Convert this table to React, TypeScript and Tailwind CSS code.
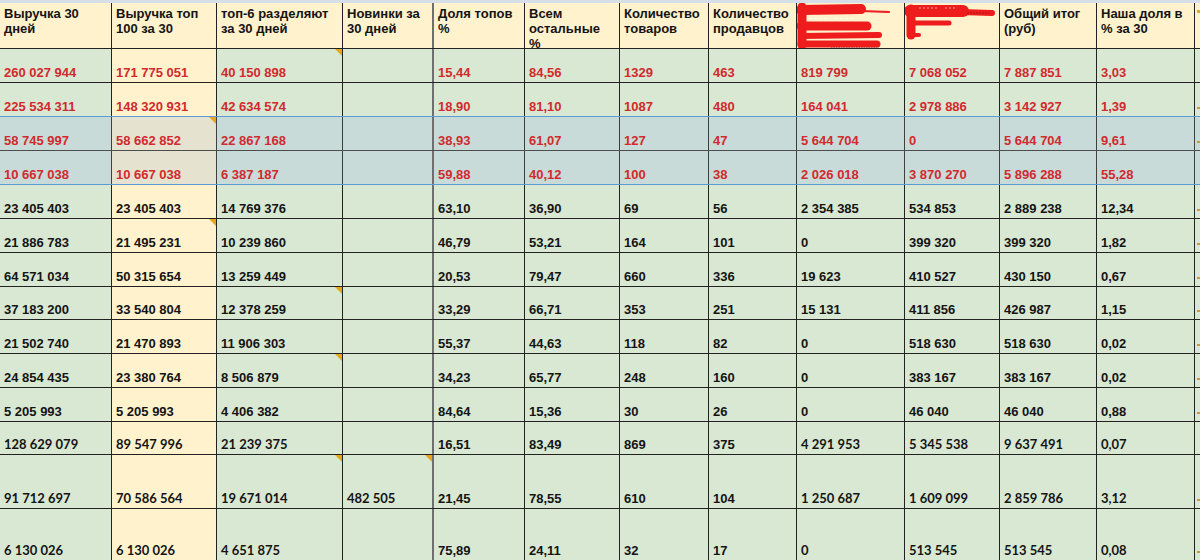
import React from 'react';

const GRID = 'grid grid-cols-[112px_105px_126px_91px_91px_95px_89px_88px_108px_95px_97px_98px_5px]';

interface Row {
  cells: string[];
  h: string;
  line: string;
  red?: boolean;
  blue?: boolean;
  calibri?: boolean;
  marks?: number[];
  edge?: boolean;
}

const BLACK = 'border-[#222]';

const rows: Row[] = [
  { cells: ['260 027 944', '171 775 051', '40 150 898', '', '15,44', '84,56', '1329', '463', '819 799', '7 068 052', '7 887 851', '3,03'], h: 'h-[34px]', line: BLACK, red: true, marks: [2] },
  { cells: ['225 534 311', '148 320 931', '42 634 574', '', '18,90', '81,10', '1087', '480', '164 041', '2 978 886', '3 142 927', '1,39'], h: 'h-[34px]', line: 'border-[#5b9bd5]', red: true, edge: true },
  { cells: ['58 745 997', '58 662 852', '22 867 168', '', '38,93', '61,07', '127', '47', '5 644 704', '0', '5 644 704', '9,61'], h: 'h-[34px]', line: 'border-[#4d4d4d]', red: true, blue: true, marks: [1], edge: true },
  { cells: ['10 667 038', '10 667 038', '6 387 187', '', '59,88', '40,12', '100', '38', '2 026 018', '3 870 270', '5 896 288', '55,28'], h: 'h-[34px]', line: 'border-[#5b9bd5]', red: true, blue: true },
  { cells: ['23 405 403', '23 405 403', '14 769 376', '', '63,10', '36,90', '69', '56', '2 354 385', '534 853', '2 889 238', '12,34'], h: 'h-[34px]', line: BLACK, edge: true },
  { cells: ['21 886 783', '21 495 231', '10 239 860', '', '46,79', '53,21', '164', '101', '0', '399 320', '399 320', '1,82'], h: 'h-[34px]', line: BLACK, marks: [1], edge: true },
  { cells: ['64 571 034', '50 315 654', '13 259 449', '', '20,53', '79,47', '660', '336', '19 623', '410 527', '430 150', '0,67'], h: 'h-[34px]', line: BLACK, edge: true },
  { cells: ['37 183 200', '33 540 804', '12 378 259', '', '33,29', '66,71', '353', '251', '15 131', '411 856', '426 987', '1,15'], h: 'h-[33px]', line: BLACK, marks: [2], edge: true },
  { cells: ['21 502 740', '21 470 893', '11 906 303', '', '55,37', '44,63', '118', '82', '0', '518 630', '518 630', '0,02'], h: 'h-[34px]', line: BLACK, edge: true },
  { cells: ['24 854 435', '23 380 764', '8 506 879', '', '34,23', '65,77', '248', '160', '0', '383 167', '383 167', '0,02'], h: 'h-[34px]', line: BLACK, marks: [2], edge: true },
  { cells: ['5 205 993', '5 205 993', '4 406 382', '', '84,64', '15,36', '30', '26', '0', '46 040', '46 040', '0,88'], h: 'h-[34px]', line: BLACK, edge: true },
  { cells: ['128 629 079', '89 547 996', '21 239 375', '', '16,51', '83,49', '869', '375', '4 291 953', '5 345 538', '9 637 491', '0,07'], h: 'h-[33px]', line: BLACK, calibri: true },
  { cells: ['91 712 697', '70 586 564', '19 671 014', '482 505', '21,45', '78,55', '610', '104', '1 250 687', '1 609 099', '2 859 786', '3,12'], h: 'h-[54px]', line: BLACK, calibri: true, marks: [2, 3], edge: true },
  { cells: ['6 130 026', '6 130 026', '4 651 875', '', '75,89', '24,11', '32', '17', '0', '513 545', '513 545', '0,08'], h: 'h-[52px]', line: BLACK, calibri: true, edge: true },
];

const headers: string[][] = [
  ['Выручка 30', 'дней'],
  ['Выручка топ', '100 за 30'],
  ['топ-6 разделяют', 'за 30 дней'],
  ['Новинки за', '30 дней'],
  ['Доля топов', '%'],
  ['Всем', 'остальные', '%'],
  ['Количество', 'товаров'],
  ['Количество', 'продавцов'],
  [],
  [],
  ['Общий итог', '(руб)'],
  ['Наша доля в', '% за 30'],
  [],
];

const arial = "font-['Liberation_Sans',Arial,sans-serif] font-bold";
const calibri = "font-['Lato','Noto_Sans',sans-serif] font-bold";

function rightBorder(i: number, blue?: boolean) {
  if (i === 12) return '';
  if (i === 3) return 'border-r-2 border-[#6f6f6f]';
  return blue ? 'border-r border-[#3f3f3f]' : 'border-r border-[#222]';
}

function Marker() {
  return (
    <span className="absolute right-0 top-0 w-0 h-0 border-l-[7px] border-l-transparent border-t-[7px] border-t-[#eaa51f]" />
  );
}

// scribbled-out header cells
function ScribbleA() {
  return (
    <svg className="absolute inset-0" width="108" height="46" viewBox="0 0 108 46">
      <g stroke="#ee1c1c" strokeLinecap="round" fill="none">
        <path d="M5 4 L5 42" strokeWidth="9" />
        <path d="M4 7 L64 6" strokeWidth="10" />
        <path d="M64 8 L92 9" strokeWidth="2" />
        <path d="M4 23 L70 23" strokeWidth="9" />
        <path d="M4 33 L82 32" strokeWidth="6" />
        <path d="M4 41 L80 41" strokeWidth="7" />
      </g>
      <path d="M12 15.5 L30 15.5 M38 15.5 L58 15.5" stroke="#fff" strokeWidth="1" strokeDasharray="3 2" opacity="0.7" />
      <path d="M34 45 L82 45" stroke="#555" strokeWidth="1" strokeDasharray="1.5 1" />
    </svg>
  );
}

function ScribbleB() {
  return (
    <svg className="absolute inset-0" width="95" height="46" viewBox="0 0 95 46">
      <g stroke="#ee1c1c" strokeLinecap="round" fill="none">
        <path d="M5 8 L58 8" strokeWidth="12" />
        <path d="M55 9 L87 10" strokeWidth="6" />
        <path d="M6 6 L6 32" strokeWidth="9" />
        <path d="M5 20 L44 20" strokeWidth="5" />
        <path d="M6 32 L14 32" strokeWidth="4" />
      </g>
      <path d="M14 5 L34 5 M40 5 L52 5" stroke="#fff" strokeWidth="1" strokeDasharray="2 2" opacity="0.6" />
      <path d="M62 10 L84 10" stroke="#7a1010" strokeWidth="1" strokeDasharray="2 1" opacity="0.6" />
    </svg>
  );
}

function cellBg(r: Row, i: number) {
  if (r.blue) return i === 1 ? 'bg-[#e5e2cf]' : 'bg-[#c8dbd8]';
  return i === 1 ? 'bg-[#fff2cc]' : 'bg-[#d9e8d3]';
}

export default function App() {
  return (
    <div className="w-[1200px] h-[560px] overflow-hidden bg-[#d9e8d3] text-[13px] leading-[15px]">
      <div className="h-[3px] bg-[#d6dee8]" />

      {/* Header */}
      <div className={`${GRID} h-[46px] border-b border-[#222] bg-[#fff2cc] ${arial} text-[#141414]`}>
        {headers.map((lines, i) => (
          <div key={i} className={`relative overflow-hidden whitespace-nowrap pl-[4px] pt-[3px] ${rightBorder(i)}`}>
            {lines.map((l, j) => (
              <div key={j}>{l}</div>
            ))}
            {i === 8 && <ScribbleA />}
            {i === 9 && <ScribbleB />}
            {i === 12 && <span className="absolute left-[2px] top-[7px] w-[3px] h-[3px] bg-[#e3a23a]" />}
          </div>
        ))}
      </div>

      {/* Body */}
      {rows.map((r, ri) => (
        <div key={ri} className={`${GRID} ${r.h} border-b ${r.line}`}>
          {[...r.cells, ''].map((c, i) => {
            const font = r.calibri && (i < 4 || i > 7) ? calibri : arial;
            const color = r.red ? 'text-[#d12a2e]' : 'text-[#141414]';
            return (
              <div
                key={i}
                className={`relative flex items-end overflow-hidden whitespace-nowrap ${i === 12 ? 'pl-[2px] pb-[7px]' : 'pl-[4px] pb-[2px]'} ${cellBg(r, i)} ${rightBorder(i, r.blue)} ${font} ${color}`}
              >
                {c}
                {i === 12 && r.edge && <span className="w-[3px] h-[2px] bg-[#c99a3a]" />}
                {r.marks?.includes(i) && <Marker />}
              </div>
            );
          })}
        </div>
      ))}
    </div>
  );
}
